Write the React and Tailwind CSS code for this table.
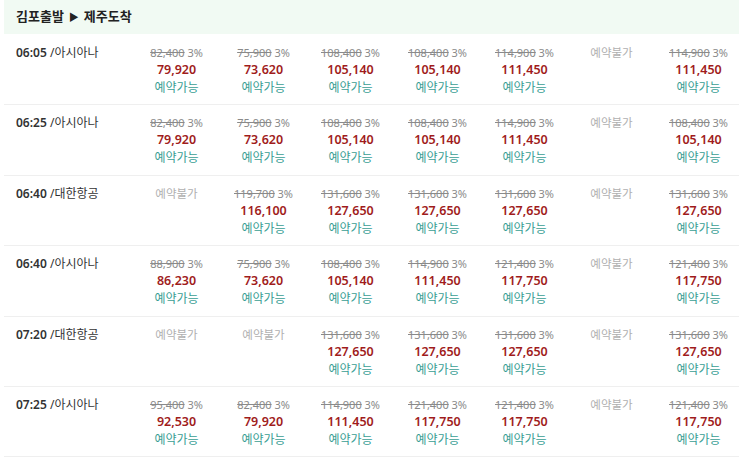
const NA = null

const flights = [
  {
    time: '06:05',
    airline: '아시아나',
    fares: [['82,400', '79,920'], ['75,900', '73,620'], ['108,400', '105,140'], ['108,400', '105,140'], ['114,900', '111,450'], NA, ['114,900', '111,450']],
  },
  {
    time: '06:25',
    airline: '아시아나',
    fares: [['82,400', '79,920'], ['75,900', '73,620'], ['108,400', '105,140'], ['108,400', '105,140'], ['114,900', '111,450'], NA, ['108,400', '105,140']],
  },
  {
    time: '06:40',
    airline: '대한항공',
    fares: [NA, ['119,700', '116,100'], ['131,600', '127,650'], ['131,600', '127,650'], ['131,600', '127,650'], NA, ['131,600', '127,650']],
  },
  {
    time: '06:40',
    airline: '아시아나',
    fares: [['88,900', '86,230'], ['75,900', '73,620'], ['108,400', '105,140'], ['114,900', '111,450'], ['121,400', '117,750'], NA, ['121,400', '117,750']],
  },
  {
    time: '07:20',
    airline: '대한항공',
    fares: [NA, NA, ['131,600', '127,650'], ['131,600', '127,650'], ['131,600', '127,650'], NA, ['131,600', '127,650']],
  },
  {
    time: '07:25',
    airline: '아시아나',
    fares: [['95,400', '92,530'], ['82,400', '79,920'], ['114,900', '111,450'], ['121,400', '117,750'], ['121,400', '117,750'], NA, ['121,400', '117,750']],
  },
]

function Fare({ fare }) {
  if (!fare) {
    return <div className="text-[11.5px] leading-[17px] text-[#b0b0b0]">예약불가</div>
  }
  const [orig, price] = fare
  return (
    <div className="flex flex-col items-center">
      <div className="text-[11px] leading-[17px] text-[#8a8a8a]">
        <span className="line-through">{orig}</span> 3%
      </div>
      <div className="text-[12.5px] leading-[18px] font-semibold text-[#a01c1c]">{price}</div>
      <div className="text-[12px] leading-[17px] text-[#3a9e94]">예약가능</div>
    </div>
  )
}

export default function App() {
  return (
    <div
      className="w-[743px] h-[465px] bg-white px-[4px] overflow-hidden"
      style={{ fontFamily: '"Noto Sans", "Noto Sans CJK KR", sans-serif' }}
    >
      {/* Header */}
      <div className="h-[34px] mb-[1px] bg-[#f1faf3] flex items-center pl-[12px] text-[13px] font-semibold text-[#222]">
        김포출발 <span className="text-[10px] mx-[5px]">▶</span> 제주도착
      </div>

      {flights.map((f, i) => (
        <div
          key={i}
          className="grid grid-cols-[129px_repeat(7,87px)] h-[70.4px] border-b border-[#efefef] pt-[9px]"
        >
          <div className="pl-[12px] text-[12px] leading-[17px] text-[#333]">
            <span className="font-semibold">{f.time}</span> /{f.airline}
          </div>
          {f.fares.map((fare, j) => (
            <div key={j} className="flex justify-center">
              <Fare fare={fare} />
            </div>
          ))}
        </div>
      ))}
    </div>
  )
}
